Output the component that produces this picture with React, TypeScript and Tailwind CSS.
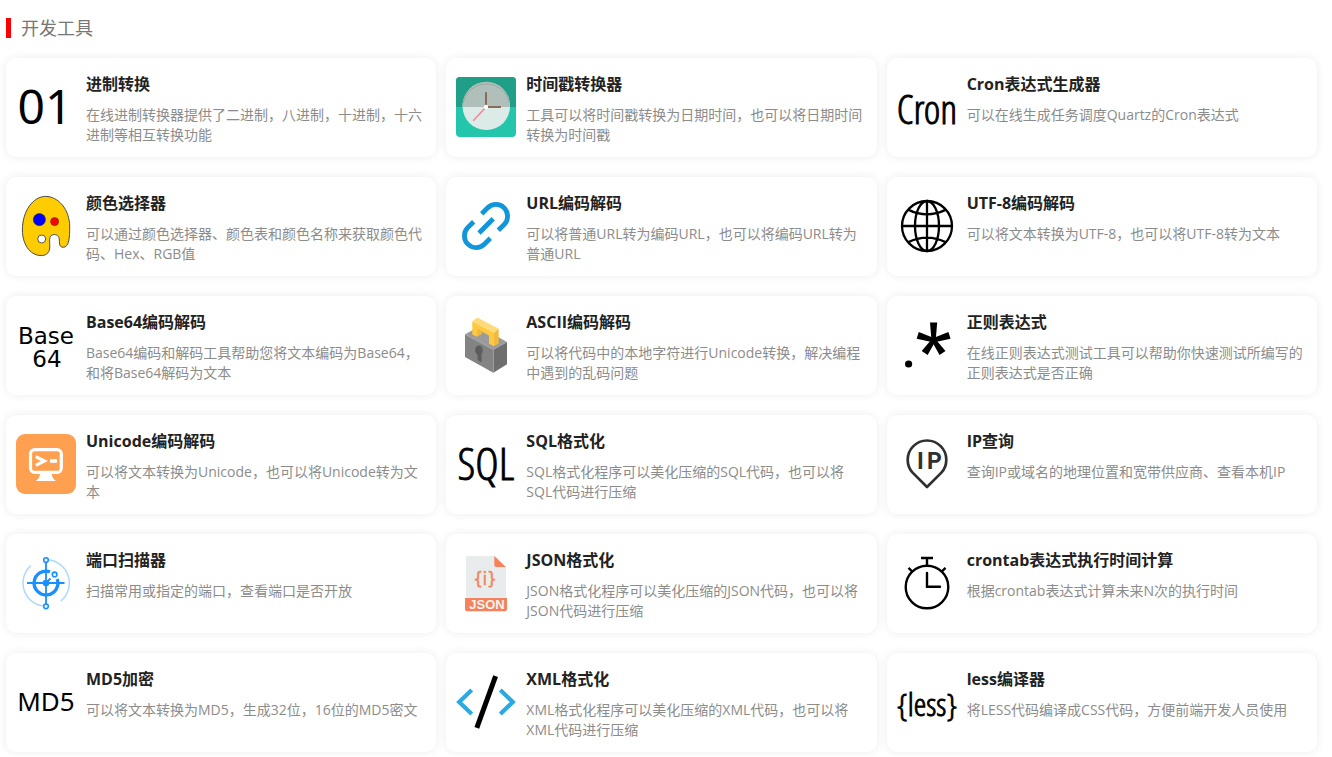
import type { ReactNode } from "react";

const narrow = "font-['Open_Sans_Condensed_Light','Liberation_Sans_Narrow',sans-serif] fill-black stroke-black";
const wide = "font-['Noto_Sans',sans-serif]";

function Icon({ children }: { children: ReactNode }) {
  return (
    <svg viewBox="0 0 60 60" className="size-[60px] shrink-0 overflow-visible" fill="none" aria-hidden="true">
      {children}
    </svg>
  );
}

const BinaryIcon = () => (
  <Icon>
    <text x="29" y="47" textAnchor="middle" className={`${wide} fill-black text-[48px]`}>01</text>
  </Icon>
);

const ClockIcon = () => (
  <Icon>
    <rect width="60" height="60" rx="4" fill="#23c6aa" />
    <path d="M0 30V4a4 4 0 0 1 4-4h52a4 4 0 0 1 4 4v26z" fill="#1f9f88" />
    <circle cx="30.3" cy="29.4" r="23.7" fill="#dcebe8" />
    <path d="M6.6 30V28.4A23.7 23.7 0 0 1 54 28.4V30z" fill="#b0bfba" />
    <path d="M7.2 26A23.5 23.5 0 0 1 53.4 26" stroke="#9aa8a4" strokeWidth="1" />
    <path d="M30 15.3V30H45" stroke="#8a6a58" strokeWidth="2" />
    <path d="M30 30L17.3 43.7" stroke="#f4849c" strokeWidth="1.6" />
    <circle cx="30" cy="30" r="2.2" fill="#fff" />
  </Icon>
);

const CronIcon = () => (
  <Icon>
    <text x="30" y="47" textAnchor="middle" strokeWidth="0.9" className={`${narrow} text-[40px]`}>Cron</text>
  </Icon>
);

const PaletteIcon = () => (
  <Icon>
    <path
      d="M29.7.4C42 .4 53.7 13 53.7 31C53.7 41 53.2 51.3 47.2 51.3C44.2 51.3 43.4 49 43.4 45.5C43.4 41.5 42.4 38.6 38.4 38.6C34.6 38.6 33.6 41 33.6 45C33.6 47 33.9 49 33.7 52C33.2 57.5 29.5 59.6 25 59.6C13 59.2 6.4 47 6.4 34C6.4 15 17 .4 29.7.4z"
      fill="#ffcc00"
      stroke="#4a4a4a"
      strokeWidth="1"
    />
    <circle cx="23.4" cy="23.6" r="6.1" fill="#00f" stroke="#333" strokeWidth=".6" />
    <circle cx="38.6" cy="25.6" r="4" fill="#f00" stroke="#7a3300" strokeWidth=".8" />
    <circle cx="25.7" cy="43" r="4" fill="#fff" stroke="#555" strokeWidth="1" />
  </Icon>
);

const LinkIcon = () => (
  <Icon>
    <g stroke="#1296db" strokeWidth="4.8">
      <path d="M25.7 17.7L31.7 11.7A11.74 11.74 0 0 1 48.3 28.3L42.3 34.3" />
      <path d="M34.3 42.3L28.3 48.3A11.74 11.74 0 0 1 11.7 31.7L17.7 25.7" />
      <path d="M23 37L37.2 22.8" />
    </g>
  </Icon>
);

const GlobeIcon = () => (
  <Icon>
    <g stroke="#000" strokeWidth="2.3">
      <circle cx="30" cy="30" r="25" />
      <ellipse cx="30" cy="30" rx="12" ry="25" />
      <path d="M30 5V55M5 30H55M11 13.6Q30 23 49 13.6M11 46.4Q30 37 49 46.4" />
    </g>
  </Icon>
);

const Base64Icon = () => (
  <Icon>
    <text textAnchor="middle" className="fill-black font-['DejaVu_Sans',sans-serif] text-[23px]">
      <tspan x="30" y="29">Base</tspan>
      <tspan x="31" y="52">64</tspan>
    </text>
  </Icon>
);

const LockIcon = () => (
  <Icon>
    <path d="M9 19.3L23.3 11.5L51 27L37.3 34.5z" fill="#9b9b9b" />
    <path d="M9 19.3L37.3 34.5V57.8L9 42z" fill="#838383" />
    <path d="M37.3 34.5L51 27V49.3L37.3 57.8z" fill="#6e6e6e" />
    <path d="M9 19.3L37.3 34.5L51 27M37.3 34.5V57.8" stroke="#a9a9a9" strokeWidth=".6" />
    <path d="M20.5 13.5L26 17.2V19L20.5 22z" fill="#f3b93a" />
    <path d="M16.3 6.2L38 17.8V31.3L33 28.8V20.5L21 14V21.8L16.3 19.4z" fill="#ffc93f" />
    <path d="M16.3 6.2L21.3 2.4L42.7 13.8L38 17.8z" fill="#ffda78" />
    <path d="M38 17.8L42.7 13.8V28.4L38 31.3z" fill="#f3b93a" />
    <ellipse cx="23" cy="35" rx="4" ry="4.6" fill="#5c5c5c" />
    <path d="M21.4 37L25.4 38.6L25.6 47.2L21.6 45z" fill="#5c5c5c" />
    <path d="M25 32.4Q27.6 35.5 25.8 38.2" stroke="#6c6c6c" strokeWidth="1" />
  </Icon>
);

const RegexIcon = () => (
  <Icon>
    <circle cx="11.6" cy="49" r="3.6" fill="#000" />
    <g fill="#000" transform="translate(36.6 25.2)">
      <path d="M-3.6-17.6H3.6L2 1H-2z" />
      <path d="M-3.6-16.6H3.6L2 1H-2z" transform="rotate(73)" />
      <path d="M-3.6-16.6H3.6L2 1H-2z" transform="rotate(-73)" />
      <path d="M-3.6-15.6H3.6L2 1H-2z" transform="rotate(145)" />
      <path d="M-3.6-15.6H3.6L2 1H-2z" transform="rotate(-145)" />
    </g>
  </Icon>
);

const TerminalIcon = () => (
  <Icon>
    <rect width="60" height="60" rx="9" fill="#ff9f50" />
    <rect x="14.5" y="15.6" width="30.8" height="22.8" rx="4.2" stroke="#fff" strokeWidth="3.2" />
    <path d="M24 39H35.8C36 43 37 44.8 40 47H19.6C22.6 44.8 23.8 43 24 39z" fill="#fff" />
    <path d="M19.8 22.6L28.4 27L19.8 31.4" stroke="#fff" strokeWidth="3.2" />
    <path d="M34 27H41" stroke="#fff" strokeWidth="3.6" />
  </Icon>
);

const SqlIcon = () => (
  <Icon>
    <text x="30" y="46" textAnchor="middle" strokeWidth="0.9" className={`${narrow} text-[45px]`}>SQL</text>
  </Icon>
);

const IpIcon = () => (
  <Icon>
    <path
      d="M30 53L15.6 38.6C12 35 10.7 30.6 10.7 25.8A19.3 19.3 0 0 1 49.3 25.8C49.3 30.6 48 35 44.4 38.6z"
      stroke="#2f3031"
      strokeWidth="2.7"
      strokeLinejoin="round"
    />
    <text y="35" className="fill-[#2f3031] font-['Roboto',sans-serif] text-[23px] font-bold">
      <tspan x="20">I</tspan>
      <tspan x="30">P</tspan>
    </text>
  </Icon>
);

const ScanIcon = () => (
  <Icon>
    <g stroke="#b1d8ff" strokeWidth="1.5">
      <path d="M32 6.8A23.3 23.3 0 0 1 44.8 48" />
      <path d="M28 53.2A23.3 23.3 0 0 1 14.8 12.6" />
    </g>
    <g stroke="#1890ff">
      <path d="M34 18.8A11.9 11.9 0 1 0 41.2 26" strokeWidth="3.3" />
      <path d="M11 30H48.5M30 9.5V51" strokeWidth="1.8" />
      <path d="M30 30L34.5 25.5" strokeWidth="1.8" />
      <circle cx="30" cy="7" r="2.3" fill="#fff" strokeWidth="1.6" />
      <circle cx="30" cy="53.3" r="2.3" fill="#fff" strokeWidth="1.6" />
      <circle cx="38.6" cy="21.4" r="2.3" fill="#fff" strokeWidth="1.6" />
    </g>
    <circle cx="30" cy="30" r="3.3" fill="#1890ff" />
  </Icon>
);

const JsonIcon = () => (
  <Icon>
    <path d="M12 3H38.3L50 14V50H10V5a2 2 0 0 1 2-2z" fill="#e8ecec" />
    <path d="M38.3 3L49.8 14H40.3a2 2 0 0 1-2-2z" fill="#f5825a" />
    <path d="M9 45H51V56.2a2 2 0 0 1-2 2H11a2 2 0 0 1-2-2z" fill="#f5825a" />
    <text x="29" y="32" textAnchor="middle" strokeWidth="0.5" className="fill-[#f5825a] stroke-[#f5825a] font-['DejaVu_Sans_Condensed','DejaVu_Sans',sans-serif] text-[17px]">{"{i}"}</text>
    <text x="31" y="56" textAnchor="middle" className="fill-[#f4f4f4] font-['Liberation_Sans',sans-serif] text-[13px] font-bold">JSON</text>
  </Icon>
);

const StopwatchIcon = () => (
  <Icon>
    <g stroke="#000" strokeWidth="2.4">
      <circle cx="30" cy="34" r="21.3" />
      <path d="M24 5H36M30 5V12.7M15.7 19L11.5 14.8M44.3 19L48.5 14.8" />
      <path d="M30 20V33.7H43" strokeLinecap="round" />
    </g>
  </Icon>
);

const Md5Icon = () => (
  <Icon>
    <text x="30" y="39" textAnchor="middle" className={`${wide} fill-black text-[26px]`}>MD5</text>
  </Icon>
);

const XmlIcon = () => (
  <Icon>
    <path d="M15.7 18L3.2 30L15.7 42M44.3 18L56.8 30L44.3 42" stroke="#29abe2" strokeWidth="4.2" />
    <path d="M39.6 4.2L20.8 55.8" stroke="#000" strokeWidth="5" />
  </Icon>
);

const LessIcon = () => (
  <Icon>
    <text x="30" y="44" textAnchor="middle" strokeWidth="0.9" className={`${narrow} text-[32px]`}>{"{less}"}</text>
  </Icon>
);

const tools = [
  { icon: BinaryIcon, name: "进制转换", text: "在线进制转换器提供了二进制，八进制，十进制，十六进制等相互转换功能" },
  { icon: ClockIcon, name: "时间戳转换器", text: "工具可以将时间戳转换为日期时间，也可以将日期时间转换为时间戳" },
  { icon: CronIcon, name: "Cron表达式生成器", text: "可以在线生成任务调度Quartz的Cron表达式" },
  { icon: PaletteIcon, name: "颜色选择器", text: "可以通过颜色选择器、颜色表和颜色名称来获取颜色代码、Hex、RGB值" },
  { icon: LinkIcon, name: "URL编码解码", text: "可以将普通URL转为编码URL，也可以将编码URL转为普通URL" },
  { icon: GlobeIcon, name: "UTF-8编码解码", text: "可以将文本转换为UTF-8，也可以将UTF-8转为文本" },
  { icon: Base64Icon, name: "Base64编码解码", text: "Base64编码和解码工具帮助您将文本编码为Base64，和将Base64解码为文本" },
  { icon: LockIcon, name: "ASCII编码解码", text: "可以将代码中的本地字符进行Unicode转换，解决编程中遇到的乱码问题" },
  { icon: RegexIcon, name: "正则表达式", text: "在线正则表达式测试工具可以帮助你快速测试所编写的正则表达式是否正确" },
  { icon: TerminalIcon, name: "Unicode编码解码", text: "可以将文本转换为Unicode，也可以将Unicode转为文本" },
  { icon: SqlIcon, name: "SQL格式化", text: "SQL格式化程序可以美化压缩的SQL代码，也可以将SQL代码进行压缩" },
  { icon: IpIcon, name: "IP查询", text: "查询IP或域名的地理位置和宽带供应商、查看本机IP" },
  { icon: ScanIcon, name: "端口扫描器", text: "扫描常用或指定的端口，查看端口是否开放" },
  { icon: JsonIcon, name: "JSON格式化", text: "JSON格式化程序可以美化压缩的JSON代码，也可以将JSON代码进行压缩" },
  { icon: StopwatchIcon, name: "crontab表达式执行时间计算", text: "根据crontab表达式计算未来N次的执行时间" },
  { icon: Md5Icon, name: "MD5加密", text: "可以将文本转换为MD5，生成32位，16位的MD5密文" },
  { icon: XmlIcon, name: "XML格式化", text: "XML格式化程序可以美化压缩的XML代码，也可以将XML代码进行压缩" },
  { icon: LessIcon, name: "less编译器", text: "将LESS代码编译成CSS代码，方便前端开发人员使用" },
];

export default function App() {
  return (
    <main lang="zh-CN" className="bg-white pt-[18px] pr-[15px] pb-1 pl-[6px] font-['Open_Sans','Noto_Sans_CJK_SC',sans-serif]">
      <h1 className="border-l-[5px] border-[#ff0000] pl-[10px] text-[18px] leading-[20px] font-normal text-[#777]">开发工具</h1>
      <div className="mt-5 grid grid-cols-3 gap-x-[10px] gap-y-5">
        {tools.map(({ icon: ToolIcon, name, text }) => (
          <a
            key={name}
            href="#"
            className="flex items-start gap-[10px] rounded-[10px] bg-white px-[10px] pb-5 shadow-[0_0_10px_rgba(0,0,0,0.08)]"
          >
            <div className="shrink-0 pt-[19px]">
              <ToolIcon />
            </div>
            <div className="min-w-0 flex-1 pt-4">
              <h2 className="text-[16px] leading-[20px] font-bold text-[#222]">{name}</h2>
              <p className="mt-[11px] -mb-2 text-[14px] leading-[20px] text-[#8c8c8c]">{text}</p>
            </div>
          </a>
        ))}
      </div>
    </main>
  );
}
